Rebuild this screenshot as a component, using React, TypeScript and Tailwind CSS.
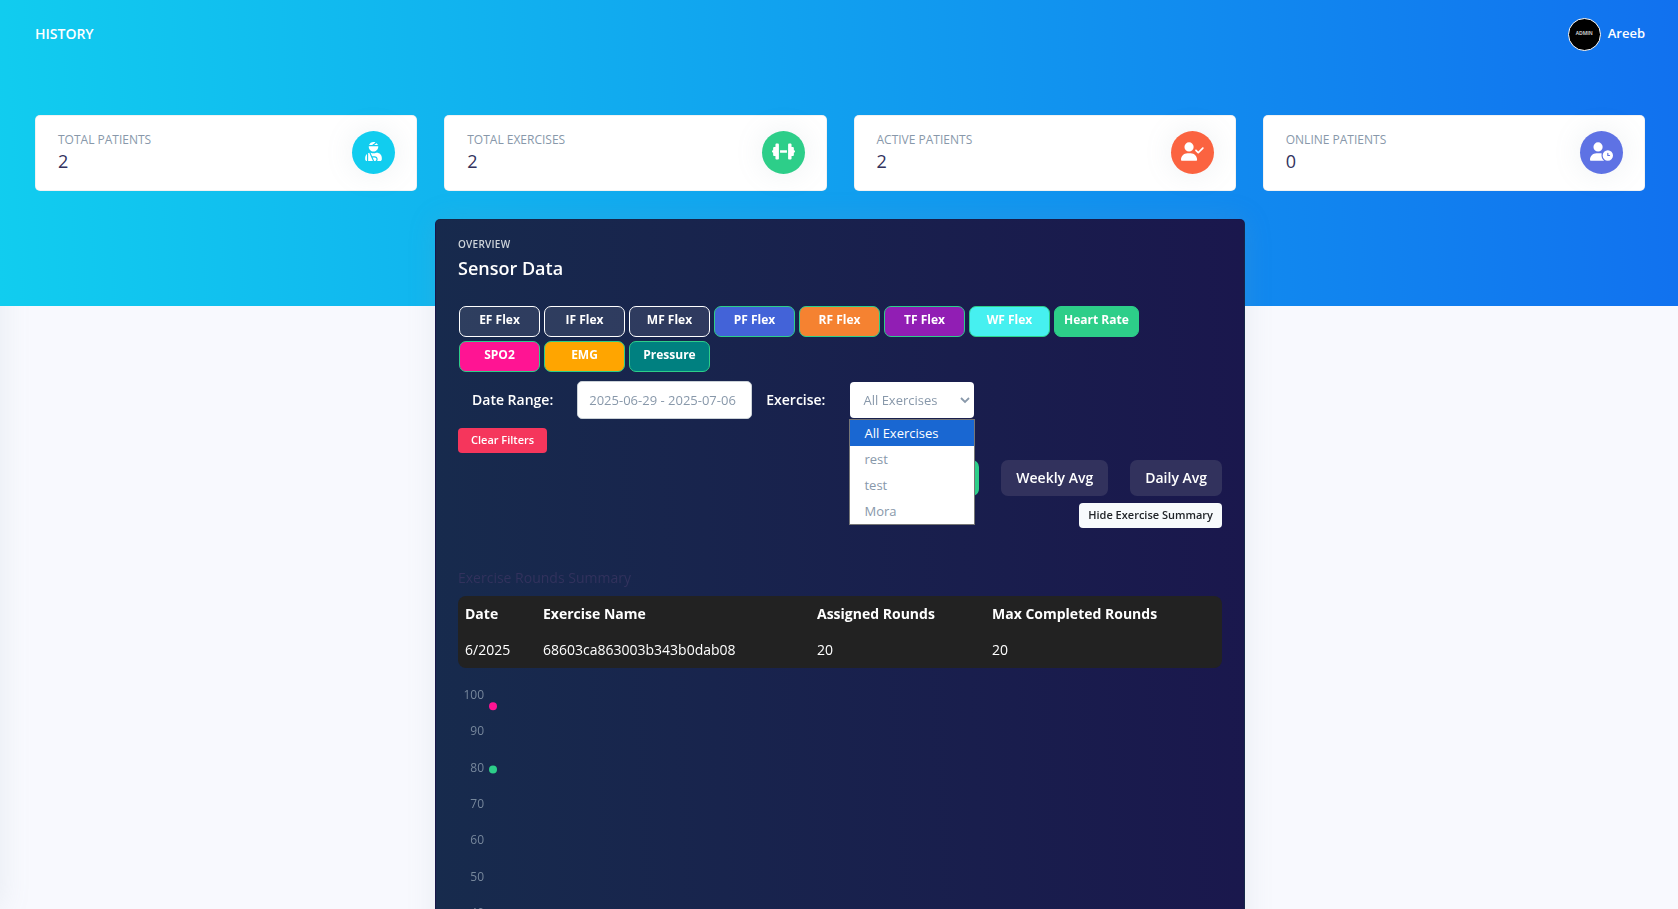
import { useState } from "react";
import type { ReactNode } from "react";
import { FaUserInjured } from "react-icons/fa";
import { FaDumbbell, FaUserCheck, FaUserClock } from "react-icons/fa6";

interface Stat {
  label: string;
  value: number;
  icon: ReactNode;
  tint: string;
}

const stats: Stat[] = [
  { label: "Total Patients", value: 2, icon: <FaUserInjured />, tint: "bg-[#11cdef]" },
  { label: "Total Exercises", value: 2, icon: <FaDumbbell />, tint: "bg-[#2dce89]" },
  { label: "Active Patients", value: 2, icon: <FaUserCheck />, tint: "bg-[#fb6340]" },
  { label: "Online Patients", value: 0, icon: <FaUserClock />, tint: "bg-[#5e72e4]" },
];

const sensors = [
  { name: "EF Flex", style: "border-white bg-white/10" },
  { name: "IF Flex", style: "border-white bg-white/10" },
  { name: "MF Flex", style: "border-white bg-white/10" },
  { name: "PF Flex", style: "border-[#2dce89] bg-[#4363d8]" },
  { name: "RF Flex", style: "border-[#2dce89] bg-[#f58231]" },
  { name: "TF Flex", style: "border-[#2dce89] bg-[#911eb4]" },
  { name: "WF Flex", style: "border-[#2dce89] bg-[#46f0f0]" },
  { name: "Heart Rate", style: "border-[#2dce89] bg-[#2dce89]" },
  { name: "SPO2", style: "border-[#2dce89] bg-[#ff1493]" },
  { name: "EMG", style: "border-[#2dce89] bg-[#ffa500]" },
  { name: "Pressure", style: "border-[#2dce89] bg-[#008080]" },
];

const exercises = ["All Exercises", "rest", "test", "Mora"];

const periods = ["Monthly Avg", "Weekly Avg", "Daily Avg"];

const rounds = [{ date: "6/2025", name: "68603ca863003b343b0dab08", assigned: 20, completed: 20 }];

const ticks = [100, 90, 80, 70, 60, 50, 40, 30, 20, 10, 0];

const points = [
  { value: 96.6, color: "#ff1493" },
  { value: 79.2, color: "#2dce89" },
];

function StatCard({ stat }: { stat: Stat }) {
  return (
    <article className="flex h-[76px] items-start justify-between rounded-[5px] border border-black/5 bg-white pt-[15px] pr-[21px] pl-[22px]">
      <div>
        <h2 className="text-xs leading-[18px] font-medium text-[#8898aa] uppercase">{stat.label}</h2>
        <p className="text-lg leading-6 font-medium text-[#32325d]">{stat.value}</p>
      </div>
      <span
        className={`flex size-[43px] items-center justify-center rounded-full pb-[3px] text-white shadow-[0_0_29px_rgba(136,152,170,0.15)] [&>svg]:h-[19px] [&>svg]:w-[23px] ${stat.tint}`}
      >
        {stat.icon}
      </span>
    </article>
  );
}

function ExerciseFilter() {
  const [selected, setSelected] = useState(exercises[0]);
  const [open, setOpen] = useState(true);

  return (
    <div className="relative ml-[25px] font-normal">
      <select
        id="exercise"
        value={selected}
        onChange={(e) => setSelected(e.target.value)}
        className="block h-9 w-[124px] appearance-none rounded bg-white pl-[13px] text-[13px] text-[#8898aa] outline-none"
      >
        {exercises.map((name) => (
          <option key={name}>{name}</option>
        ))}
      </select>
      <svg
        viewBox="0 0 10 7"
        className="pointer-events-none absolute top-[15px] right-1 h-[7px] w-[10px]"
        fill="none"
        stroke="#8898aa"
        strokeWidth="1.8"
      >
        <path d="M1 1l4 4 4-4" />
      </svg>
      {open && (
        <ul
          role="listbox"
          aria-label="Exercise"
          className="absolute top-[37px] -left-px z-10 w-[126px] border border-[#767676] bg-white text-[13px] leading-[26px] text-[#8898aa]"
        >
          {exercises.map((name) => (
            <li
              key={name}
              role="option"
              aria-selected={name === selected}
              onClick={() => {
                setSelected(name);
                setOpen(false);
              }}
              className="cursor-default pl-[14px] aria-selected:bg-[#1967d2] aria-selected:text-white"
            >
              {name}
            </li>
          ))}
        </ul>
      )}
    </div>
  );
}

function SensorChart() {
  const y = (value: number) => 14 + (100 - value) * 3.63;
  return (
    <svg className="mt-3 h-[400px] w-full" role="img" aria-label="Sensor readings">
      {ticks.map((tick) => (
        <text key={tick} x="26" y={y(tick) + 5} textAnchor="end" fontSize="12" fill="#8898aa" opacity="0.85">
          {tick}
        </text>
      ))}
      {points.map((point) => (
        <circle key={point.color} cx="35" cy={y(point.value)} r="4" fill={point.color} />
      ))}
    </svg>
  );
}

export default function App() {
  const [period, setPeriod] = useState(periods[0]);
  const [showSummary, setShowSummary] = useState(true);

  return (
    <div className="min-h-screen overflow-x-hidden bg-[#f8f9fe] font-['Open_Sans',sans-serif] text-[#525f7f]">
      <aside className="fixed inset-y-0 right-full w-56 shadow-[0_0_29px_rgba(136,152,170,0.15)]" />
      <header className="relative h-[306px] bg-[linear-gradient(87deg,#11cdef_0%,#1171ef_100%)] pr-[33px] pl-[35px]">
        <nav className="flex h-[68px] items-center justify-between text-white">
          <a href="#history" className="text-sm font-semibold uppercase">
            History
          </a>
          <a href="#profile" className="flex items-center gap-[7px] text-[13px] font-semibold">
            <span className="flex size-[33px] items-center justify-center rounded-full border border-white bg-black text-[5px] font-semibold text-white/90">
              ADMIN
            </span>
            Areeb
          </a>
        </nav>
        <section className="grid grid-cols-4 gap-[27px] pt-[47px]">
          {stats.map((stat) => (
            <StatCard key={stat.label} stat={stat} />
          ))}
        </section>
      </header>

      <div className="relative -mt-[87px] pr-[33px] pl-[35px]">
        <main className="mx-auto max-w-[810px] rounded-[5px] border border-black/5 bg-[linear-gradient(87deg,#172b4d_0%,#1a174d_100%)] px-[22px] pt-4 pb-6 shadow-[0_0_29px_rgba(136,152,170,0.15)]">
          <h6 className="text-[10px] leading-4 font-semibold tracking-wide text-[#ced4da] uppercase">Overview</h6>
          <h2 className="mt-1 text-lg leading-6 font-semibold text-white">Sensor Data</h2>

          <div className="mt-[26px] flex max-w-[720px] flex-wrap gap-1 pl-px">
            {sensors.map((sensor) => (
              <button
                key={sensor.name}
                type="button"
                className={`h-[31px] min-w-[81px] rounded-[7px] border px-[9px] pb-1 text-xs font-bold text-white ${sensor.style}`}
              >
                {sensor.name}
              </button>
            ))}
          </div>

          <div className="mt-[9px] flex items-center text-sm font-semibold text-white">
            <label htmlFor="range" className="ml-[14px]">
              Date Range:
            </label>
            <input
              id="range"
              type="text"
              readOnly
              value="2025-06-29 - 2025-07-06"
              className="ml-6 h-[38px] w-[175px] rounded-[5px] border border-[#cad1d7] bg-white px-[11px] text-[13px] font-normal text-[#8898aa] outline-none"
            />
            <label htmlFor="exercise" className="ml-[14px]">
              Exercise:
            </label>
            <ExerciseFilter />
          </div>

          <button
            type="button"
            className="mt-[9px] block h-[25px] rounded bg-[#f5365c] px-[13px] text-[11px] font-semibold text-white"
          >
            Clear Filters
          </button>

          <div className="mt-[7px] flex justify-end gap-[22px]">
            {periods.map((name) => (
              <button
                key={name}
                type="button"
                aria-pressed={name === period}
                onClick={() => setPeriod(name)}
                className="h-9 rounded-[7px] bg-[#32325d] px-[15px] text-sm font-semibold text-white aria-pressed:bg-[#2dce89]"
              >
                {name}
              </button>
            ))}
          </div>

          <div className="mt-[7px] flex justify-end">
            <button
              type="button"
              onClick={() => setShowSummary(!showSummary)}
              className="h-[25px] rounded bg-[#f7fafc] px-[9px] text-[11px] font-semibold text-[#212529]"
            >
              Hide Exercise Summary
            </button>
          </div>

          {showSummary && (
            <section className="mt-[39px]">
              <h5 className="text-sm leading-[22px] text-[#32325d]">Exercise Rounds Summary</h5>
              <table className="mt-[7px] w-full table-fixed overflow-hidden rounded-lg bg-[#222222] text-left text-sm text-white">
                <thead>
                  <tr className="h-9">
                    <th className="w-[78px] px-[7px] font-bold">Date</th>
                    <th className="w-[274px] px-[7px] font-bold">Exercise Name</th>
                    <th className="w-[175px] px-[7px] font-bold">Assigned Rounds</th>
                    <th className="px-[7px] font-bold">Max Completed Rounds</th>
                  </tr>
                </thead>
                <tbody>
                  {rounds.map((round) => (
                    <tr key={round.name} className="h-9">
                      <td className="px-[7px]">{round.date}</td>
                      <td className="px-[7px]">{round.name}</td>
                      <td className="px-[7px]">{round.assigned}</td>
                      <td className="px-[7px]">{round.completed}</td>
                    </tr>
                  ))}
                </tbody>
              </table>
            </section>
          )}

          <SensorChart />
        </main>
      </div>
    </div>
  );
}
